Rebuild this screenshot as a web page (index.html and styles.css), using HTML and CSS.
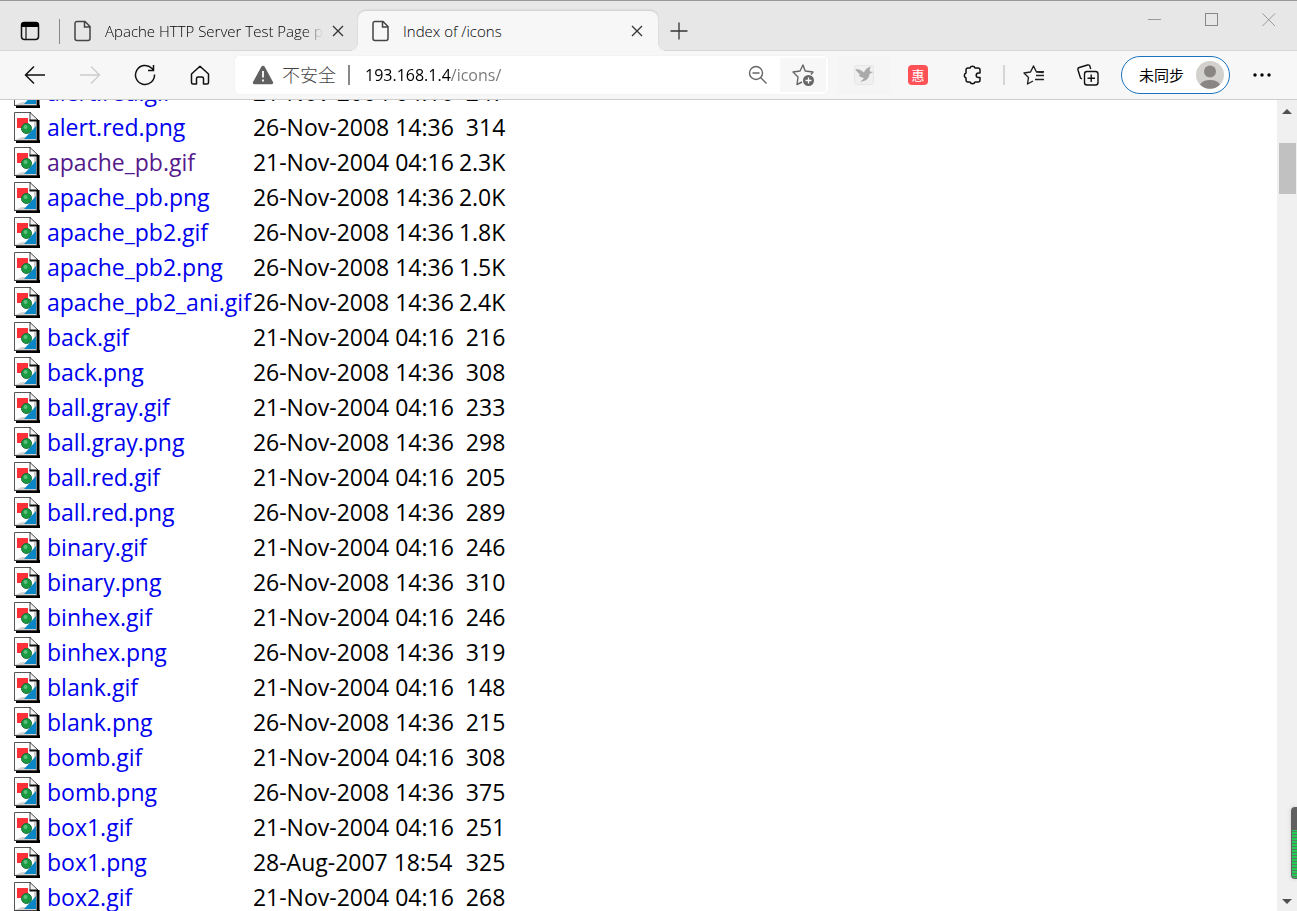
FILE: index.html
```
<!DOCTYPE html>
<html lang="en" dir="ltr">

<head>
  <meta charset="utf-8">
  <title>Index of /icons</title>
  <link rel="stylesheet" href="styles.css">
</head>

<body>
  <svg class="defs" aria-hidden="true">
    <symbol id="image2" viewBox="0 0 26 31">
      <path d="M0.5 29V0.5H17L24 8V29z" fill="#fff"/>
      <path d="M1 28L8 25l12 1V10h2v18z" fill="#d0d0d0"/>
      <path d="M0.500 29V0.500H17" fill="none" stroke="#555" stroke-width="1"/>
      <path d="M16 1v8h8z" fill="#f4f4f4"/>
      <path d="M16 0.500v8M16 0.500L24 8" fill="none" stroke="#444" stroke-width="1"/>
      <path d="M15.500 8.500H24" fill="none" stroke="#111" stroke-width="2"/>
      <path d="M24 8V30M2 29.500H26" fill="none" stroke="#000" stroke-width="3"/>
      <path d="M0 28.500H23" stroke="#444" stroke-width="1"/>
      <rect x="3" y="6" width="11" height="10" fill="#ff3037"/>
      <path d="M22 14v13H10z" fill="#0a86c4"/>
      <circle cx="12.500" cy="16.500" r="5" fill="#1a9a40" stroke="#1c6a38" stroke-width="1"/>
      <circle cx="11.500" cy="15" r="2" fill="#5cc07c"/>
    </symbol>
    <symbol id="page" viewBox="0 0 18 22">
      <path d="M3 1.500h8l5 5V18.500a2 2 0 0 1-2 2H3a2 2 0 0 1-2-2V3.500a2 2 0 0 1 2-2zM10.500 1.500V7H16" fill="none" stroke="#444" stroke-width="1.500"/>
    </symbol>
    <symbol id="cross" viewBox="0 0 12 12">
      <path d="M1 1l10 10M11 1L1 11" fill="none" stroke="#333" stroke-width="1.300"/>
    </symbol>
  </svg>

  <header>
    <div class="titlebar">
      <button type="button" class="tab-menu" aria-label="Tab actions">
        <svg width="20" height="20" viewBox="0 0 20 20"><rect x="1.500" y="1.500" width="17" height="17" rx="3" fill="none" stroke="#111" stroke-width="1.500"/><path d="M1 6V4a3 3 0 0 1 3-3h12a3 3 0 0 1 3 3v2z" fill="#000"/><path d="M6 6v12" stroke="#111" stroke-width="1.200"/></svg>
      </button>
      <div class="tab">
        <svg width="18" height="22"><use href="#page"/></svg>
        <span class="tab-title faded">Apache HTTP Server Test Page po</span>
        <button type="button" class="tab-close" aria-label="Close tab"><svg width="12" height="12"><use href="#cross"/></svg></button>
      </div>
      <div class="tab active">
        <svg width="18" height="22"><use href="#page"/></svg>
        <span class="tab-title">Index of /icons</span>
        <button type="button" class="tab-close" aria-label="Close tab"><svg width="12" height="12"><use href="#cross"/></svg></button>
      </div>
      <button type="button" class="new-tab" aria-label="New tab">
        <svg width="18" height="18" viewBox="0 0 18 18"><path d="M9 0.500v17M0.500 9h17" stroke="#333" stroke-width="1.300"/></svg>
      </button>
      <div class="window-buttons">
        <button type="button" aria-label="Minimize"><svg width="14" height="14" viewBox="0 0 14 14"><path d="M0 6.500h13" stroke="#999"/></svg></button>
        <button type="button" aria-label="Maximize"><svg width="14" height="14" viewBox="0 0 14 14"><rect x="0.500" y="0.500" width="12" height="12" fill="none" stroke="#888"/></svg></button>
        <button type="button" aria-label="Close"><svg width="14" height="14" viewBox="0 0 14 14"><path d="M0.500 0.500l12.500 12.500M13 0.500L0.500 13" stroke="#999"/></svg></button>
      </div>
    </div>

    <div class="toolbar">
      <button type="button" class="tool nav" aria-label="Back">
        <svg width="22" height="20" viewBox="0 0 22 20"><path d="M21 10H1.500M10 1.500L1.500 10l8.500 8.500" fill="none" stroke="#111" stroke-width="1.500"/></svg>
      </button>
      <button type="button" class="tool nav" aria-label="Forward">
        <svg width="22" height="20" viewBox="0 0 22 20"><path d="M1 10h19.500M12 1.500l8.500 8.500-8.500 8.500" fill="none" stroke="#ccc" stroke-width="1.300"/></svg>
      </button>
      <button type="button" class="tool nav" aria-label="Refresh">
        <svg width="22" height="22" viewBox="0 0 22 22"><path d="M20.500 10.500A9.500 9.500 0 1 1 17.800 4.300L19.500 6M19.500 1v5.500H14" fill="none" stroke="#111" stroke-width="1.500"/></svg>
      </button>
      <button type="button" class="tool nav" aria-label="Home">
        <svg width="20" height="20" viewBox="0 0 20 20"><path d="M1.500 9L10 1.200 18.500 9v8.500a1.500 1.500 0 0 1-1.500 1.500h-3.500V13.500a1.500 1.500 0 0 0-1.500-1.500H8a1.500 1.500 0 0 0-1.500 1.500V19H3a1.500 1.500 0 0 1-1.500-1.500z" fill="none" stroke="#111" stroke-width="1.500" stroke-linejoin="round"/></svg>
      </button>

      <div class="address">
        <svg width="22" height="20" viewBox="0 0 22 20"><path d="M11 0.800a2 2 0 0 1 1.700 1L21 17a1.500 1.500 0 0 1-1.400 2.200H2.400A1.500 1.500 0 0 1 1 17L9.300 1.800a2 2 0 0 1 1.700-1z" fill="#606060"/><path d="M11 6v6.500M11 14.500v2" stroke="#fff" stroke-width="1.800"/></svg>
        <label for="url">不安全</label>
        <input type="text" id="url" value="193.168.1.4/icons/">
        <svg width="20" height="20" viewBox="0 0 20 20"><g fill="none" stroke="#666" stroke-width="1.400"><circle cx="8" cy="8" r="6.500"/><path d="M12.800 12.800L18.500 18.500M4.500 8h7"/></g></svg>
        <button type="button" class="favorite" aria-label="Add to favorites">
          <svg width="24" height="24" viewBox="0 0 24 24"><path d="M20 11.500l2-2.500-7.800-1L12 2 9 8l-7 1 5 5-1 7.500 5-2.500" fill="none" stroke="#666" stroke-width="1.400" stroke-linejoin="round"/><circle cx="17.500" cy="17.500" r="5.500" fill="#666"/><path d="M17.500 14.500v6M14.500 17.500h6" stroke="#fff" stroke-width="1.300"/></svg>
        </button>
      </div>

      <button type="button" class="tool extension" aria-label="Bird extension">
        <svg width="20" height="20" viewBox="0 0 20 20"><rect x="0.500" y="0.500" width="19" height="19" rx="2" fill="#f0f0f0" stroke="#e6e6e6"/><path d="M1.500 4c3 0 6 1 8.500 3.500C11 4.500 13 2.500 17 1.500c-1.500 2-1.500 4-1 5l3 .5-3.500 2c-.5 5-4 7.500-9.500 7.500 2-1 3.500-2.500 4-3.500-3-.5-5-2-5.500-3.500l2 .2C4 8 2 6 1.500 4z" fill="#aaa"/></svg>
      </button>
      <button type="button" class="tool" aria-label="惠">
        <span class="deals">惠</span>
      </button>
      <button type="button" class="tool" aria-label="Extensions">
        <svg width="20" height="20" viewBox="0 0 20 20"><path d="M5.500 3H8a2.600 2.300 0 0 1 5 0h3a2 2 0 0 1 2 2v3h-1.500a2.300 2.300 0 0 0 0 4.600H18V15a2 2 0 0 1-2 2h-3a2.600 2.300 0 0 1-5 0H5.500a2 2 0 0 1-1.500-2v-2a2.700 2.700 0 0 1 0-5V5a2 2 0 0 1 1.500-2z" fill="none" stroke="#111" stroke-width="1.500" stroke-linejoin="round"/></svg>
      </button>
      <span class="divider"></span>
      <button type="button" class="tool" aria-label="Favorites">
        <svg width="22" height="20" viewBox="0 0 22 20"><path d="M20.500 7.500L13.500 7 10.500 1 7.500 7l-6.500 1 4.500 4.500-1 6.500L10 16M13 10.500h8M12 14.500h9M14 6.700h7" fill="none" stroke="#222" stroke-width="1.400" stroke-linejoin="round"/></svg>
      </button>
      <button type="button" class="tool" aria-label="Collections">
        <svg width="22" height="22" viewBox="0 0 22 22"><g fill="none" stroke="#111" stroke-width="1.400"><path d="M5 15l-1.500-1L1 6a2 2 0 0 1 1.300-2.500L10.500 1a2 2 0 0 1 2.500 1.500l.7 2.500"/><rect x="7.500" y="7.500" width="13.500" height="13.500" rx="2.500"/><path d="M14.200 10.500v7.500M10.500 14.200h7.500"/></g></svg>
      </button>
      <button type="button" class="profile">
        <span>未同步</span>
        <svg width="28" height="28" viewBox="0 0 28 28"><circle cx="14" cy="14" r="14" fill="#d3d1ce"/><circle cx="14" cy="10.500" r="6" fill="#8a8683"/><path d="M4 23.500a11 7.500 0 0 1 20 0A14 14 0 0 1 4 23.500z" fill="#8a8683"/></svg>
      </button>
      <button type="button" class="tool" aria-label="Settings and more">
        <svg width="18" height="4" viewBox="0 0 18 4"><circle cx="2" cy="2" r="1.700"/><circle cx="9" cy="2" r="1.700"/><circle cx="16" cy="2" r="1.700"/></svg>
      </button>
    </div>
  </header>

  <main>
    <div class="listing">
      <table>
        <tr><td><svg><use href="#image2"/></svg></td><td><a href="#">alert.red.gif</a></td><td>21-Nov-2004 04:16</td><td>247</td></tr>
        <tr><td><svg><use href="#image2"/></svg></td><td><a href="#">alert.red.png</a></td><td>26-Nov-2008 14:36</td><td>314</td></tr>
        <tr><td><svg><use href="#image2"/></svg></td><td><a href="#" class="visited">apache_pb.gif</a></td><td>21-Nov-2004 04:16</td><td>2.3K</td></tr>
        <tr><td><svg><use href="#image2"/></svg></td><td><a href="#">apache_pb.png</a></td><td>26-Nov-2008 14:36</td><td>2.0K</td></tr>
        <tr><td><svg><use href="#image2"/></svg></td><td><a href="#">apache_pb2.gif</a></td><td>26-Nov-2008 14:36</td><td>1.8K</td></tr>
        <tr><td><svg><use href="#image2"/></svg></td><td><a href="#">apache_pb2.png</a></td><td>26-Nov-2008 14:36</td><td>1.5K</td></tr>
        <tr><td><svg><use href="#image2"/></svg></td><td><a href="#">apache_pb2_ani.gif</a></td><td>26-Nov-2008 14:36</td><td>2.4K</td></tr>
        <tr><td><svg><use href="#image2"/></svg></td><td><a href="#">back.gif</a></td><td>21-Nov-2004 04:16</td><td>216</td></tr>
        <tr><td><svg><use href="#image2"/></svg></td><td><a href="#">back.png</a></td><td>26-Nov-2008 14:36</td><td>308</td></tr>
        <tr><td><svg><use href="#image2"/></svg></td><td><a href="#">ball.gray.gif</a></td><td>21-Nov-2004 04:16</td><td>233</td></tr>
        <tr><td><svg><use href="#image2"/></svg></td><td><a href="#">ball.gray.png</a></td><td>26-Nov-2008 14:36</td><td>298</td></tr>
        <tr><td><svg><use href="#image2"/></svg></td><td><a href="#">ball.red.gif</a></td><td>21-Nov-2004 04:16</td><td>205</td></tr>
        <tr><td><svg><use href="#image2"/></svg></td><td><a href="#">ball.red.png</a></td><td>26-Nov-2008 14:36</td><td>289</td></tr>
        <tr><td><svg><use href="#image2"/></svg></td><td><a href="#">binary.gif</a></td><td>21-Nov-2004 04:16</td><td>246</td></tr>
        <tr><td><svg><use href="#image2"/></svg></td><td><a href="#">binary.png</a></td><td>26-Nov-2008 14:36</td><td>310</td></tr>
        <tr><td><svg><use href="#image2"/></svg></td><td><a href="#">binhex.gif</a></td><td>21-Nov-2004 04:16</td><td>246</td></tr>
        <tr><td><svg><use href="#image2"/></svg></td><td><a href="#">binhex.png</a></td><td>26-Nov-2008 14:36</td><td>319</td></tr>
        <tr><td><svg><use href="#image2"/></svg></td><td><a href="#">blank.gif</a></td><td>21-Nov-2004 04:16</td><td>148</td></tr>
        <tr><td><svg><use href="#image2"/></svg></td><td><a href="#">blank.png</a></td><td>26-Nov-2008 14:36</td><td>215</td></tr>
        <tr><td><svg><use href="#image2"/></svg></td><td><a href="#">bomb.gif</a></td><td>21-Nov-2004 04:16</td><td>308</td></tr>
        <tr><td><svg><use href="#image2"/></svg></td><td><a href="#">bomb.png</a></td><td>26-Nov-2008 14:36</td><td>375</td></tr>
        <tr><td><svg><use href="#image2"/></svg></td><td><a href="#">box1.gif</a></td><td>21-Nov-2004 04:16</td><td>251</td></tr>
        <tr><td><svg><use href="#image2"/></svg></td><td><a href="#">box1.png</a></td><td>28-Aug-2007 18:54</td><td>325</td></tr>
        <tr><td><svg><use href="#image2"/></svg></td><td><a href="#">box2.gif</a></td><td>21-Nov-2004 04:16</td><td>268</td></tr>
      </table>
    </div>
    <div class="scrollbar">
      <span class="arrow up"></span>
      <span class="thumb"></span>
      <span class="arrow down"></span>
    </div>
  </main>
  <div class="meter"></div>
</body>

</html>
```
FILE: styles.css
```
* {
  box-sizing: border-box;
}

body {
  display: flex;
  flex-direction: column;
  height: 100vh;
  margin: 0;
  overflow: hidden;
  background-color: #fff;
  font-family: "Open Sans", "Noto Sans CJK SC", sans-serif;
}

button {
  display: flex;
  align-items: center;
  justify-content: center;
  flex-shrink: 0;
  padding: 0;
  border: 0;
  background: none;
  color: #000;
  font-family: inherit;
}

svg {
  flex-shrink: 0;
}

.defs {
  position: absolute;
  width: 0;
  height: 0;
}

/* tab strip */
.titlebar {
  display: flex;
  align-items: flex-end;
  height: 51px;
  border-top: 1px solid #999;
  background-color: #e7e7e7;
  box-shadow: inset 0 -1px #d6d6d6;
}

.tab-menu {
  width: 60px;
  height: 40px;
  position: relative;
}

.tab-menu::after {
  content: "";
  position: absolute;
  right: 0;
  top: 8px;
  width: 1px;
  height: 25px;
  background-color: #888;
}

.tab {
  display: flex;
  align-items: center;
  width: 298px;
  height: 40px;
  padding: 0 8px 0 14px;
}

.tab.active {
  position: relative;
  width: 300px;
  padding-right: 9px;
  border-radius: 8px 8px 0 0;
  background-color: #f7f7f7;
  box-shadow: 0 -1px 2px #ccc;
}

.tab.active::before, .tab.active::after {
  content: "";
  position: absolute;
  bottom: 0;
  width: 6px;
  height: 6px;
}

.tab.active::before {
  left: -6px;
  background: radial-gradient(circle at 0 0, #e7e7e7 5px, #f7f7f7 6px);
}

.tab.active::after {
  right: -6px;
  background: radial-gradient(circle at 100% 0, #e7e7e7 5px, #f7f7f7 6px);
}

.tab-title {
  flex: 1;
  overflow: hidden;
  margin-left: 13px;
  white-space: nowrap;
  font-size: 15px;
  line-height: 20px;
  font-weight: 300;
  color: #000;
}

.faded {
  -webkit-mask-image: linear-gradient(90deg, #000 200px, transparent 218px);
  mask-image: linear-gradient(90deg, #000 200px, transparent 218px);
}

.tab-close {
  width: 24px;
  height: 24px;
}

.new-tab {
  width: 42px;
  height: 40px;
}

.window-buttons {
  display: flex;
  align-self: flex-start;
  margin-left: auto;
}

.window-buttons button {
  width: 57px;
  height: 37px;
}

/* toolbar */
.toolbar {
  display: flex;
  align-items: center;
  height: 49px;
  padding: 0 8px 0 7px;
  border-bottom: 1px solid #ccc;
  background-color: #f7f7f7;
}

.tool {
  width: 54px;
  height: 38px;
}

.nav {
  width: 55px;
}

.address {
  display: flex;
  flex: 1;
  align-items: center;
  height: 38px;
  margin: 0 9px 0 8px;
  padding-left: 17px;
  border-radius: 5px;
  background-color: #fff;
  box-shadow: 0 0 3px #eee;
}

.address label {
  margin-left: 8px;
  padding-right: 12px;
  border-right: 2px solid #888;
  font-size: 18px;
  line-height: 20px;
  font-weight: 300;
  color: #444;
}

/* host in black, path in grey */
#url {
  flex: 1;
  min-width: 0;
  margin: 0 12px 0 15px;
  padding: 0;
  border: 0;
  outline: 0;
  background: linear-gradient(90deg, #000 86px, #767676 86px);
  -webkit-background-clip: text;
  background-clip: text;
  color: transparent;
  font-family: inherit;
  font-size: 16px;
  line-height: 24px;
}

.favorite {
  width: 46px;
  height: 34px;
  margin: 0 2px 0 12px;
  background-color: #f7f7f7;
}

.extension {
  background-color: #f5f5f5;
}

.deals {
  width: 20px;
  height: 20px;
  border-radius: 4px;
  background-color: #ff5257;
  color: #fff;
  font-size: 13px;
  line-height: 20px;
}

.divider {
  width: 2px;
  height: 20px;
  margin: 0 2px 0 4px;
  background-color: #d5d5d5;
}

.profile {
  gap: 12px;
  width: 109px;
  height: 38px;
  margin: 0 5px 0 6px;
  padding-left: 14px;
  padding-right: 2px;
  border: 1px solid #1a73c0;
  border-radius: 19px;
  background-color: #fff;
  font-size: 15px;
  line-height: 20px;
}

/* directory listing */
main {
  display: flex;
  flex: 1;
  min-height: 0;
}

.listing {
  flex: 1;
  overflow: hidden;
}

table {
  margin: -25px 0 0 14px;
  border-collapse: collapse;
  font-size: 23px;
  line-height: 35px;
}

td {
  height: 35px;
  padding: 0 2px 0 0;
  white-space: nowrap;
}

td:first-child {
  padding-right: 7px;
}

td:nth-child(3) {
  padding-right: 5px;
}

td:last-child {
  padding: 0;
  text-align: right;
}

td svg {
  display: block;
  width: 26px;
  height: 31px;
}

a {
  color: #0000ee;
  text-decoration: none;
}

a.visited {
  color: #551a8b;
}

.scrollbar {
  display: flex;
  flex-direction: column;
  align-items: center;
  width: 20px;
  padding: 9px 0 7px;
  background-color: #f0f0f0;
}

.arrow {
  border: 5px solid transparent;
}

.up {
  border-top: 0;
  border-bottom-color: #505050;
}

.down {
  margin-top: auto;
  border-bottom: 0;
  border-top-color: #505050;
}

.thumb {
  width: 17px;
  height: 51px;
  margin-top: 29px;
  background-color: #c1c1c1;
}

/* desktop meter docked on the window edge */
.meter {
  position: fixed;
  right: 0;
  bottom: 32px;
  width: 6px;
  height: 72px;
  border: 1px solid #606060;
  border-right: 0;
  border-radius: 4px 0 0 4px;
  background: linear-gradient(#606060 22px, transparent 22px), repeating-linear-gradient(#22cc55 0 2px, #5a7a60 2px 3px);
  box-shadow: 0 0 4px #ccc;
}
```
